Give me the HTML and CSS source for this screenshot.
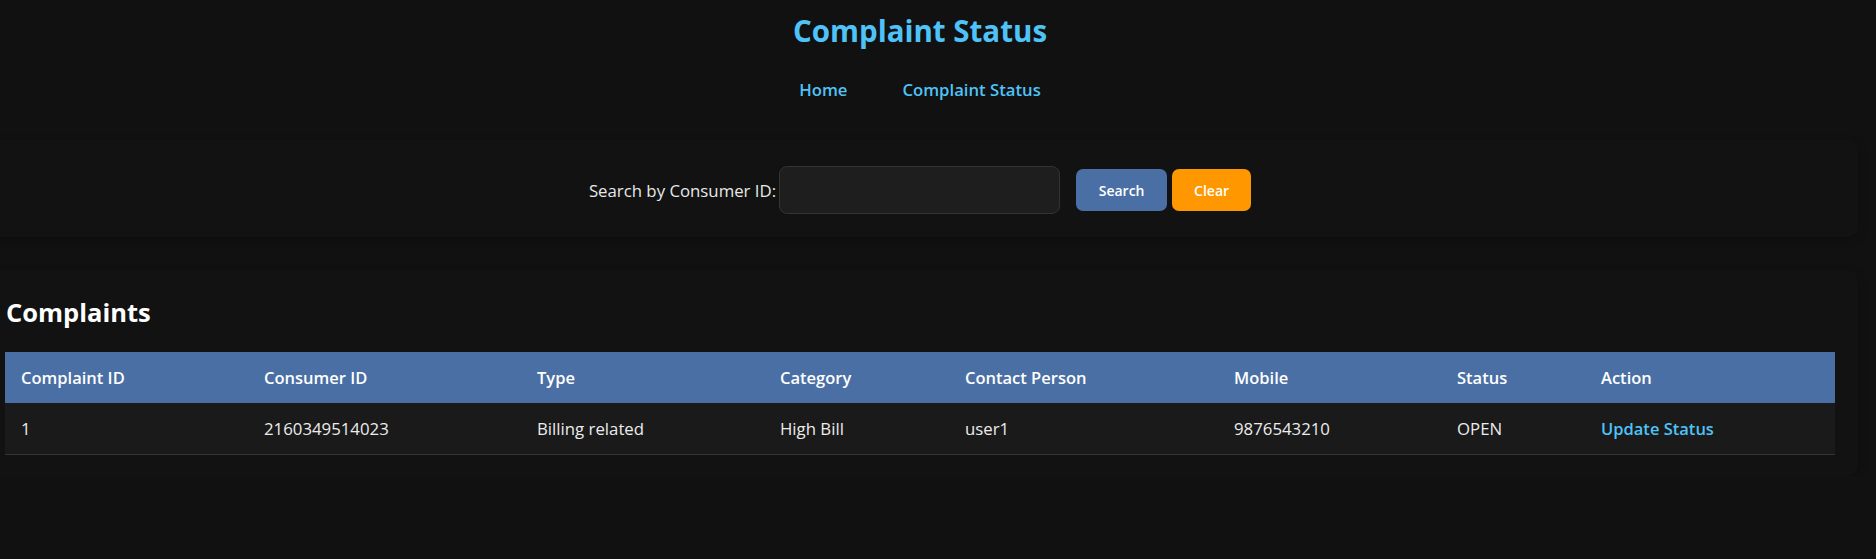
FILE: index.html
```html
<!DOCTYPE html>
<html lang="en">
<head>
<meta charset="utf-8">
<title>Complaint Status</title>
<link rel="stylesheet" href="styles.css">
</head>
<body>
<div class="page">
  <header class="header">
    <h1 class="title">Complaint Status</h1>
    <nav class="nav">
      <a class="nav-link" href="#">Home</a>
      <a class="nav-link" href="#">Complaint Status</a>
    </nav>
  </header>

  <section class="panel search-panel">
    <form class="search-form">
      <label class="search-label" for="cid">Search by Consumer ID:</label>
      <input class="search-input" id="cid" type="text">
      <button class="btn btn-search" type="button">Search</button>
      <button class="btn btn-clear" type="button">Clear</button>
    </form>
  </section>

  <section class="panel table-panel">
    <h2 class="section-title">Complaints</h2>
    <table class="complaints">
      <colgroup>
        <col class="c1"><col class="c2"><col class="c3"><col class="c4">
        <col class="c5"><col class="c6"><col class="c7"><col class="c8">
      </colgroup>
      <thead>
        <tr>
          <th>Complaint ID</th>
          <th>Consumer ID</th>
          <th>Type</th>
          <th>Category</th>
          <th>Contact Person</th>
          <th>Mobile</th>
          <th>Status</th>
          <th>Action</th>
        </tr>
      </thead>
      <tbody>
        <tr>
          <td>1</td>
          <td>2160349514023</td>
          <td>Billing related</td>
          <td>High Bill</td>
          <td>user1</td>
          <td>9876543210</td>
          <td>OPEN</td>
          <td><a class="action-link" href="#">Update Status</a></td>
        </tr>
      </tbody>
    </table>
  </section>
</div>
</body>
</html>
```

FILE: styles.css
```css
* {
  box-sizing: border-box;
}

html, body {
  margin: 0;
  padding: 0;
  background: #111111;
}

body {
  font-family: "Open Sans", "Noto Sans", "Liberation Sans", sans-serif;
  color: #e0e0e0;
  overflow: hidden;
}

.page {
  width: 1830px;
  margin-left: 5px;
}

.header {
  padding-top: 11px;
  text-align: center;
}

.title {
  margin: 0;
  font-size: 29.5px;
  line-height: 40px;
  font-weight: 700;
  color: #4fc3f7;
}

.nav {
  margin-top: 27px;
  display: flex;
  justify-content: center;
  gap: 55px;
}

.nav-link {
  font-size: 16.7px;
  line-height: 24px;
  font-weight: 600;
  color: #4fc3f7;
  text-decoration: none;
}

.panel {
  margin: 0 -23px;
  padding-left: 23px;
  padding-right: 23px;
  background: #121212;
  border-radius: 10px;
  box-shadow: 0 3px 10px rgba(0, 0, 0, 0.22);
}

.search-panel {
  margin-top: 38px;
  padding-top: 26px;
  padding-bottom: 23px;
}

.search-form {
  display: flex;
  justify-content: center;
  align-items: center;
  margin: 0;
}

.search-label {
  font-size: 16.8px;
  color: #e8e8e8;
  margin-right: 3px;
}

.search-input {
  width: 281px;
  height: 48px;
  background: #1e1e1e;
  border: 1px solid #333333;
  border-radius: 8px;
  color: #e0e0e0;
  margin: 0 16px 0 0;
  padding: 0 10px;
  font-family: inherit;
  font-size: 16px;
}

.btn {
  height: 42px;
  border: none;
  border-radius: 7px;
  color: #ffffff;
  font-family: inherit;
  font-size: 14px;
  font-weight: 600;
  cursor: pointer;
}

.btn-search {
  background: #4a6fa5;
  width: 91px;
  margin-right: 5px;
}

.btn-clear {
  background: #ff9800;
  width: 79px;
}

.table-panel {
  margin-top: 33px;
  padding-top: 25px;
  padding-bottom: 21px;
}

.section-title {
  margin: 0 0 23px 1px;
  font-size: 25.5px;
  line-height: 34px;
  font-weight: 700;
  color: #ffffff;
}

.complaints {
  width: 1830px;
  border-collapse: collapse;
  table-layout: fixed;
}

.c1 { width: 243px; }
.c2 { width: 273px; }
.c3 { width: 243px; }
.c4 { width: 185px; }
.c5 { width: 269px; }
.c6 { width: 223px; }
.c7 { width: 144px; }
.c8 { width: 250px; }

.complaints th,
.complaints td {
  padding: 15px 16px;
  text-align: left;
  line-height: 21px;
  white-space: nowrap;
}

.complaints th {
  background: #4a6fa5;
  color: #ffffff;
  font-size: 16.5px;
  font-weight: 600;
}

.complaints td {
  background: #1a1a1a;
  color: #ececec;
  font-size: 16.8px;
  font-weight: 400;
  border-bottom: 1px solid #333333;
}

.action-link {
  color: #4fc3f7;
  font-weight: 600;
  font-size: 16.5px;
  text-decoration: none;
}
```
